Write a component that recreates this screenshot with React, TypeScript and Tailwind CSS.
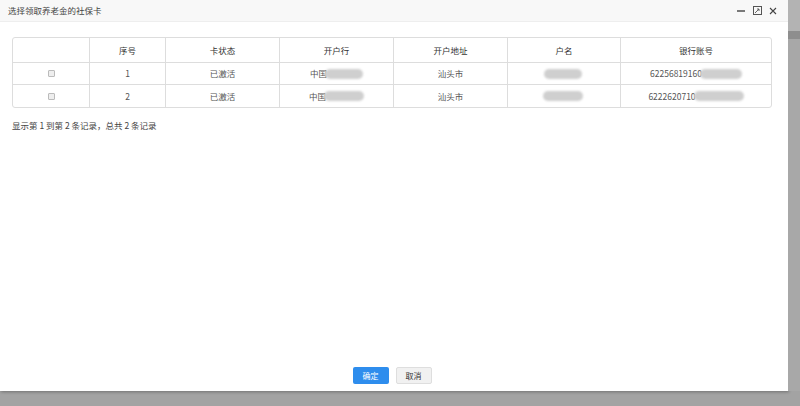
import React from "react";

type Row = {
  no: string;
  status: string;
  bank: string;
  blobBank: string;
  addr: string;
  blobName: string;
  account: string;
  blobAcc: string;
};

const rows: Row[] = [
  { no: "1", status: "已激活", bank: "中国", blobBank: "w-[38px]", addr: "汕头市", blobName: "w-[38px]", account: "62256819160", blobAcc: "w-[42px]" },
  { no: "2", status: "已激活", bank: "中国", blobBank: "w-[40px]", addr: "汕头市", blobName: "w-[40px]", account: "6222620710", blobAcc: "w-[50px]" },
];

const cols = ["w-[77px]", "w-[76px]", "w-[114px]", "w-[114px]", "w-[114px]", "w-[113px]", "flex-1"];
const heads = ["", "序号", "卡状态", "开户行", "开户地址", "户名", "银行账号"];

function Blob({ w }: { w: string }) {
  return <span className={`inline-block h-[10px] ${w} -ml-[2px] rounded-full bg-[#cfcfcf] blur-[1px]`} />;
}

export default function App() {
  return (
    <div
      className="flex h-[406px] w-[800px] flex-col bg-[#a3a3a3] text-[#333]"
      style={{ fontFamily: '"Noto Sans CJK SC", "Liberation Sans", sans-serif' }}
    >
      <div className="flex h-[391px]">
        <div className="flex w-[788px] flex-col bg-white shadow-[1px_1px_3px_rgba(0,0,0,0.3)]">
          {/* title bar */}
          <div className="flex h-[22px] items-center justify-between border-b border-[#eee] bg-[#f8f8f8] pl-[8px] pr-[11px]">
            <span className="text-[8.5px] text-[#444]">选择领取养老金的社保卡</span>
            <div className="flex items-center gap-[7px]">
              <svg width="9" height="9" viewBox="0 0 9 9">
                <path d="M0 5h8" stroke="#333" strokeWidth="1.3" />
              </svg>
              <svg width="9" height="9" viewBox="0 0 9 9">
                <rect x="0.5" y="0.5" width="8" height="8" fill="none" stroke="#555" strokeWidth="1" />
                <path d="M2 7l4-4M4 3h2v2" fill="none" stroke="#555" strokeWidth="0.9" />
              </svg>
              <svg width="8" height="8" viewBox="0 0 8 8">
                <path d="M1 1l6 6M7 1l-6 6" stroke="#444" strokeWidth="1.1" />
              </svg>
            </div>
          </div>

          {/* table */}
          <div className="pl-[12px] pr-[16px] pt-[15px]">
            <div className="overflow-hidden rounded-[3px] border border-[#ddd] text-[8.5px]">
              <div className="flex h-[25px] border-b border-[#ddd]">
                {heads.map((h, i) => (
                  <div
                    key={i}
                    className={`${cols[i]} flex items-center justify-center ${i < 6 ? "border-r border-[#ddd]" : ""} text-[#333]`}
                  >
                    {h}
                  </div>
                ))}
              </div>
              {rows.map((r, idx) => (
                <div key={r.no} className={`flex h-[22px] ${idx === 0 ? "border-b border-[#ddd]" : ""} text-[#555]`}>
                  <div className={`${cols[0]} flex items-center justify-center border-r border-[#ddd]`}>
                    <span className="inline-block h-[7px] w-[7px] rounded-[1px] border border-[#bbb] bg-[#eee]" />
                  </div>
                  <div className={`${cols[1]} flex items-center justify-center border-r border-[#ddd]`}>{r.no}</div>
                  <div className={`${cols[2]} flex items-center justify-center border-r border-[#ddd]`}>{r.status}</div>
                  <div className={`${cols[3]} flex items-center justify-center border-r border-[#ddd]`}>
                    <span>{r.bank}</span>
                    <Blob w={r.blobBank} />
                  </div>
                  <div className={`${cols[4]} flex items-center justify-center border-r border-[#ddd]`}>{r.addr}</div>
                  <div className={`${cols[5]} flex items-center justify-center border-r border-[#ddd]`}>
                    <Blob w={r.blobName} />
                  </div>
                  <div className={`${cols[6]} flex items-center justify-center`}>
                    <span>{r.account}</span>
                    <Blob w={r.blobAcc} />
                  </div>
                </div>
              ))}
            </div>
            <div className="mt-[11px] text-[8.5px] text-[#444]">显示第 1 到第 2 条记录，总共 2 条记录</div>
          </div>

          <div className="flex-1" />

          {/* buttons */}
          <div className="flex justify-center gap-[7px] pb-[7px] pr-[4px]">
            <button className="flex h-[17px] w-[36px] items-center justify-center rounded-[2px] bg-[#2e8ded] text-[8px] text-white">
              确定
            </button>
            <button className="flex h-[17px] w-[36px] items-center justify-center rounded-[2px] border border-[#dedede] bg-[#f1f1f1] text-[8px] text-[#333]">
              取消
            </button>
          </div>
        </div>

        {/* scrollbar strip */}
        <div className="flex flex-1 flex-col">
          <div className="h-[31px] bg-[#b3b3b3]" />
          <div className="h-[8px] bg-[#8e8e8e]" />
          <div className="flex-1 bg-[#a8a8a8]" />
        </div>
      </div>
    </div>
  );
}
